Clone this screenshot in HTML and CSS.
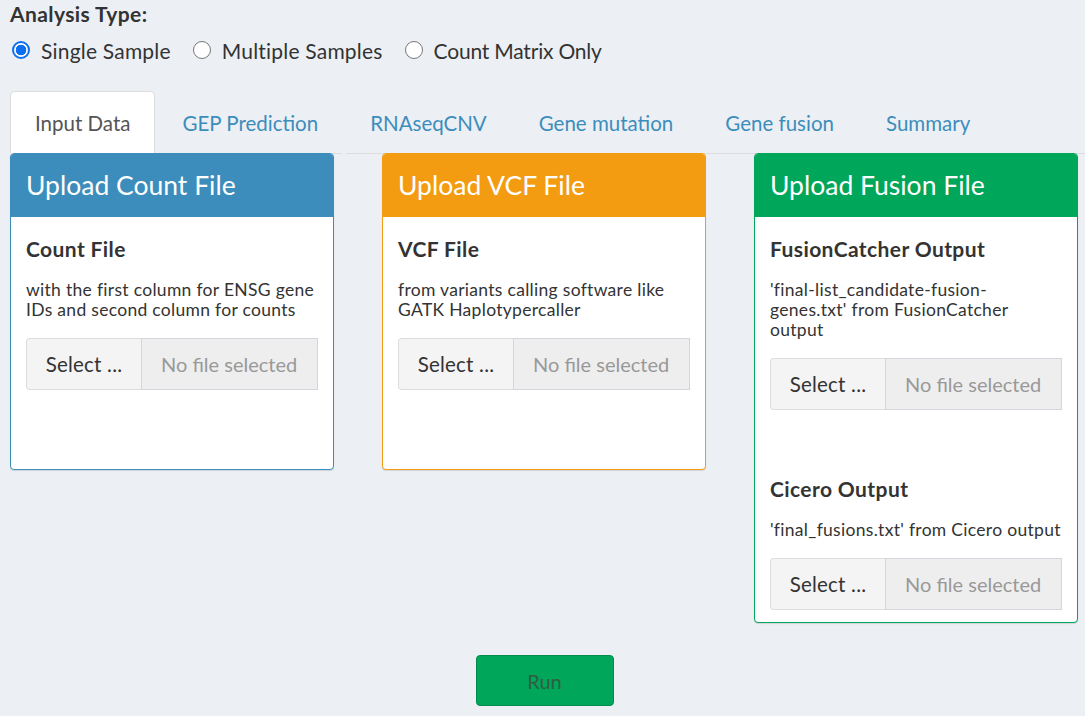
FILE: index.html
```html
<!DOCTYPE html>
<html>
<head>
<meta charset="utf-8">
<link rel="stylesheet" href="styles.css">
</head>
<body>
<div class="page">
  <div class="analysis-label">Analysis Type:</div>
  <div class="radio-row">
    <label class="radio"><span class="dot checked"></span><span>Single Sample</span></label>
    <label class="radio"><span class="dot"></span><span>Multiple Samples</span></label>
    <label class="radio"><span class="dot"></span><span>Count Matrix Only</span></label>
  </div>

  <div class="tabs">
    <div class="tab active">Input Data</div>
    <div class="tab">GEP Prediction</div>
    <div class="tab">RNAseqCNV</div>
    <div class="tab">Gene mutation</div>
    <div class="tab">Gene fusion</div>
    <div class="tab">Summary</div>
    <div class="tab-fill"></div>
  </div>

  <div class="boxes">
    <div class="box box-blue">
      <div class="box-header">Upload Count File</div>
      <div class="box-body">
        <div class="field-label">Count File</div>
        <div class="field-help">with the first column for ENSG gene IDs and second column for counts</div>
        <div class="file-input">
          <div class="file-btn">Select ...</div>
          <div class="file-name">No file selected</div>
        </div>
      </div>
    </div>

    <div class="box box-orange">
      <div class="box-header">Upload VCF File</div>
      <div class="box-body">
        <div class="field-label">VCF File</div>
        <div class="field-help">from variants calling software like GATK Haplotypercaller</div>
        <div class="file-input">
          <div class="file-btn">Select ...</div>
          <div class="file-name">No file selected</div>
        </div>
      </div>
    </div>

    <div class="box box-green">
      <div class="box-header">Upload Fusion File</div>
      <div class="box-body">
        <div class="field-label">FusionCatcher Output</div>
        <div class="field-help">'final-list_candidate-fusion-genes.txt' from FusionCatcher output</div>
        <div class="file-input">
          <div class="file-btn">Select ...</div>
          <div class="file-name">No file selected</div>
        </div>
        <div class="field-label next">Cicero Output</div>
        <div class="field-help">'final_fusions.txt' from Cicero output</div>
        <div class="file-input last">
          <div class="file-btn">Select ...</div>
          <div class="file-name">No file selected</div>
        </div>
      </div>
    </div>
  </div>

  <div class="run-row">
    <div class="run-btn">Run</div>
  </div>
</div>
</body>
</html>
```

FILE: styles.css
```css
html, body {
  margin: 0;
  padding: 0;
  background: #ecf0f5;
  font-family: Lato, "Open Sans", sans-serif;
  color: #333;
}

.page {
  padding: 0 0 0 10px;
}

.analysis-label {
  font-weight: 700;
  font-size: 21px;
  letter-spacing: 0.4px;
  line-height: 27px;
  color: #333;
}

.radio-row {
  display: flex;
  align-items: center;
  margin-top: 9px;
  height: 28px;
}

.radio {
  display: flex;
  align-items: center;
  font-size: 21px;
  letter-spacing: 0.2px;
  margin-right: 20px;
  color: #333;
}

.radio:last-child {
  letter-spacing: -0.2px;
}

.dot {
  width: 18px;
  height: 18px;
  border: 1.5px solid #767676;
  border-radius: 50%;
  background: #fff;
  margin: 0 11px 0 2px;
  box-sizing: border-box;
}

.dot.checked {
  border: 2px solid #0b6ff0;
  background: radial-gradient(circle, #0b6ff0 0 5px, #fff 5.6px);
}

.tabs {
  display: flex;
  margin-top: 27px;
  height: 63px;
}

.tab {
  padding: 0 24px;
  margin-right: 4px;
  font-size: 20.5px;
  line-height: 62px;
  color: #3c8dbc;
  border-bottom: 1px solid #dcdcdc;
  border-top: 1px solid transparent;
  box-sizing: border-box;
  height: 63px;
}

.tab.active {
  background: #fff;
  color: #555;
  border: 1px solid #dcdcdc;
  border-bottom-color: #fff;
  border-radius: 5px 5px 0 0;
  margin-right: 0;
}

.tab.active + .tab {
  padding-left: 27px;
}

.tab-fill {
  flex: 1;
  border-bottom: 1px solid #dcdcdc;
}

.boxes {
  display: grid;
  grid-template-columns: 324px 324px 324px;
  column-gap: 48px;
  align-items: start;
  margin-top: -1px;
}

.box {
  background: #fff;
  border: 1px solid;
  border-radius: 4px;
  box-shadow: 0 1px 1px rgba(0, 0, 0, 0.12);
  overflow: hidden;
}

.box-blue { border-color: #3c8dbc; }
.box-orange { border-color: #f39c12; }
.box-green { border-color: #00a65a; }

.box-header {
  height: 63px;
  line-height: 62px;
  padding: 0 15px;
  font-size: 26.5px;
  color: #fff;
}

.box-blue .box-header { background: #3c8dbc; }
.box-orange .box-header { background: #f39c12; }
.box-green .box-header { background: #00a65a; }

.box-body {
  padding: 18px 15px 12px;
}

.field-label {
  font-weight: 700;
  font-size: 21px;
  letter-spacing: 0.4px;
  line-height: 27px;
}

.field-label.next {
  margin-top: -2px;
}

.field-help {
  margin-top: 18px;
  font-size: 17.5px;
  letter-spacing: 0.3px;
  line-height: 20px;
}

.file-input {
  display: flex;
  margin-top: 18px;
  height: 52px;
  margin-bottom: 67px;
}

.file-input.last {
  margin-bottom: 0;
}

.file-btn {
  width: 115px;
  box-sizing: border-box;
  background: #f4f4f4;
  border: 1px solid #ddd;
  border-right: none;
  border-radius: 4px 0 0 4px;
  font-size: 20.5px;
  letter-spacing: 0.2px;
  color: #333;
  display: flex;
  align-items: center;
  justify-content: center;
}

.file-name {
  flex: 1;
  box-sizing: border-box;
  background: #eee;
  border: 1px solid #d2d6de;
  font-size: 20px;
  color: #999;
  display: flex;
  align-items: center;
  padding-left: 19px;
}

.run-row {
  display: flex;
  justify-content: center;
  margin-top: 32px;
  padding-right: 10px;
}

.run-btn {
  width: 138px;
  height: 51px;
  box-sizing: border-box;
  background: #00a65a;
  border: 1px solid #008d4c;
  border-radius: 4px;
  color: #2f5e42;
  font-size: 20px;
  display: flex;
  align-items: center;
  justify-content: center;
  margin-left: 4px;
}
```
